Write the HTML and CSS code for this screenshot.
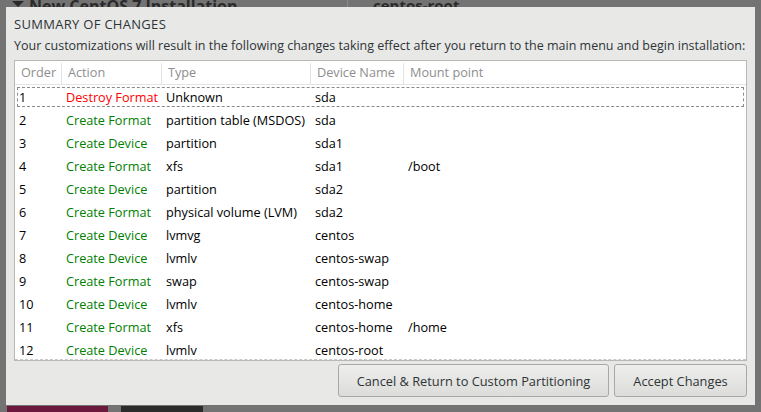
FILE: index.html
```html
<!DOCTYPE html>
<html>
<head>
<meta charset="utf-8">
<link rel="stylesheet" href="styles.css">
</head>
<body>
<div class="screen">
  <div class="backdrop">
    <div class="bg-top">
      <div class="bg-left"><span class="tri"></span><span class="bg-title">New CentOS 7 Installation</span></div>
      <div class="bg-sep"></div>
      <div class="bg-right">centos-root</div>
    </div>
    <div class="bg-bottom">
      <span class="bg-btn magenta"></span>
      <span class="bg-btn dark"></span>
    </div>
  </div>

  <div class="dialog">
    <h1 class="title">SUMMARY OF CHANGES</h1>
    <p class="desc">Your customizations will result in the following changes taking effect after you return to the main menu and begin installation:</p>
    <div class="list">
      <div class="head">
        <div class="hc">Order</div>
        <div class="hc">Action</div>
        <div class="hc">Type</div>
        <div class="hc">Device Name</div>
        <div class="hc">Mount point</div>
      </div>
      <div class="body">
        <div class="row focus"><span>1</span><span class="red">Destroy Format</span><span>Unknown</span><span>sda</span><span></span></div>
        <div class="row"><span>2</span><span class="green">Create Format</span><span>partition table (MSDOS)</span><span>sda</span><span></span></div>
        <div class="row"><span>3</span><span class="green">Create Device</span><span>partition</span><span>sda1</span><span></span></div>
        <div class="row"><span>4</span><span class="green">Create Format</span><span>xfs</span><span>sda1</span><span>/boot</span></div>
        <div class="row"><span>5</span><span class="green">Create Device</span><span>partition</span><span>sda2</span><span></span></div>
        <div class="row"><span>6</span><span class="green">Create Format</span><span>physical volume (LVM)</span><span>sda2</span><span></span></div>
        <div class="row"><span>7</span><span class="green">Create Device</span><span>lvmvg</span><span>centos</span><span></span></div>
        <div class="row"><span>8</span><span class="green">Create Device</span><span>lvmlv</span><span>centos-swap</span><span></span></div>
        <div class="row"><span>9</span><span class="green">Create Format</span><span>swap</span><span>centos-swap</span><span></span></div>
        <div class="row"><span>10</span><span class="green">Create Device</span><span>lvmlv</span><span>centos-home</span><span></span></div>
        <div class="row"><span>11</span><span class="green">Create Format</span><span>xfs</span><span>centos-home</span><span>/home</span></div>
        <div class="row"><span>12</span><span class="green">Create Device</span><span>lvmlv</span><span>centos-root</span><span></span></div>
      </div>
    </div>
    <div class="actions">
      <button class="btn cancel">Cancel &amp; Return to Custom Partitioning</button>
      <button class="btn accept">Accept Changes</button>
    </div>
  </div>
</div>
</body>
</html>
```
FILE: styles.css
```css
* { box-sizing: border-box; }
html, body { margin: 0; padding: 0; }
body {
  width: 761px;
  height: 412px;
  overflow: hidden;
  background: #737373;
  font-family: "Open Sans", "DejaVu Sans", sans-serif;
  font-size: 12.7px;
  color: #1e1e1e;
}
.screen {
  position: relative;
  width: 761px;
  height: 412px;
  overflow: hidden;
}
.backdrop {
  display: flex;
  flex-direction: column;
  justify-content: space-between;
  height: 412px;
  border-left: 1px solid #737373;
}
.bg-top {
  display: flex;
  height: 20px;
  align-items: flex-start;
}
.bg-left {
  width: 346px;
  display: flex;
  align-items: flex-start;
  padding-left: 11px;
  gap: 5px;
}
.tri {
  width: 0; height: 0;
  margin-top: 1px;
  border-left: 6px solid transparent;
  border-right: 6px solid transparent;
  border-top: 6px solid #2a2a2a;
}
.bg-title {
  font-weight: bold;
  font-size: 16px;
  line-height: 16px;
  margin-top: -2px;
  color: #2a2a2a;
}
.bg-sep {
  width: 1px;
  height: 20px;
  background: #8a8a8a;
}
.bg-right {
  padding-left: 25px;
  font-weight: bold;
  font-size: 15px;
  line-height: 16px;
  margin-top: -3px;
  color: #2a2a2a;
}
.bg-bottom {
  display: flex;
  gap: 13px;
  padding-left: 6px;
  height: 6px;
}
.bg-btn { display: block; height: 6px; }
.bg-btn.magenta { width: 101px; background: #6b1a3e; }
.bg-btn.dark { width: 82px; background: #2b2b2b; }

.dialog {
  position: absolute;
  left: 6px;
  top: 7px;
  width: 749px;
  height: 398px;
  background: #e8e8e7;
  padding: 0 8px 0 8px;
  display: flex;
  flex-direction: column;
}
.title {
  margin: 8px 0 0 0;
  font-size: 13px;
  font-weight: normal;
  line-height: 18px;
  color: #2e3436;
  letter-spacing: 0.3px;
}
.desc {
  margin: 5px 0 0 0;
  font-size: 12.5px;
  line-height: 16px;
  color: #2e3436;
  white-space: nowrap;
}
.list {
  margin-top: 6px;
  height: 301px;
  background: #fff;
  border: 1px solid #b8b8b5;
  display: flex;
  flex-direction: column;
}
.head, .row {
  display: grid;
  grid-template-columns: 47px 100px 149px 93px 1fr;
}
.head {
  height: 24px;
  border-bottom: 1px solid #e3e3e3;
  color: #8e8e8e;
}
.hc {
  padding: 1px 0 0 6px;
  line-height: 16px;
  border-right: 1px solid #e3e3e3;
  margin-top: 2px;
  white-space: nowrap;
}
.hc:last-child { border-right: none; }
.body {
  height: 275px;
  overflow: hidden;
  border-bottom: 1px dashed #c8c8c8;
}
.row {
  position: relative;
  height: 23px;
  align-items: center;
  color: #000;
}
.row span { padding-left: 4px; white-space: nowrap; line-height: 16px; }
.row.focus::after {
  content: "";
  position: absolute;
  left: 2px; right: 2px; top: 2px; bottom: 1px;
  border: 1px dashed #8a8a8a;
}
.red { color: #ff0000; }
.green { color: #008000; }
.actions {
  display: flex;
  justify-content: flex-end;
  gap: 5px;
  margin-top: 3px;
}
.btn {
  font-family: inherit;
  font-size: 12.8px;
  color: #2e3436;
  height: 33px;
  border: 1px solid #a8a8a6;
  border-radius: 3px;
  background: linear-gradient(#eeeeed, #dcdcda);
  padding: 0;
}
.cancel { width: 271px; }
.accept { width: 133px; }
```
